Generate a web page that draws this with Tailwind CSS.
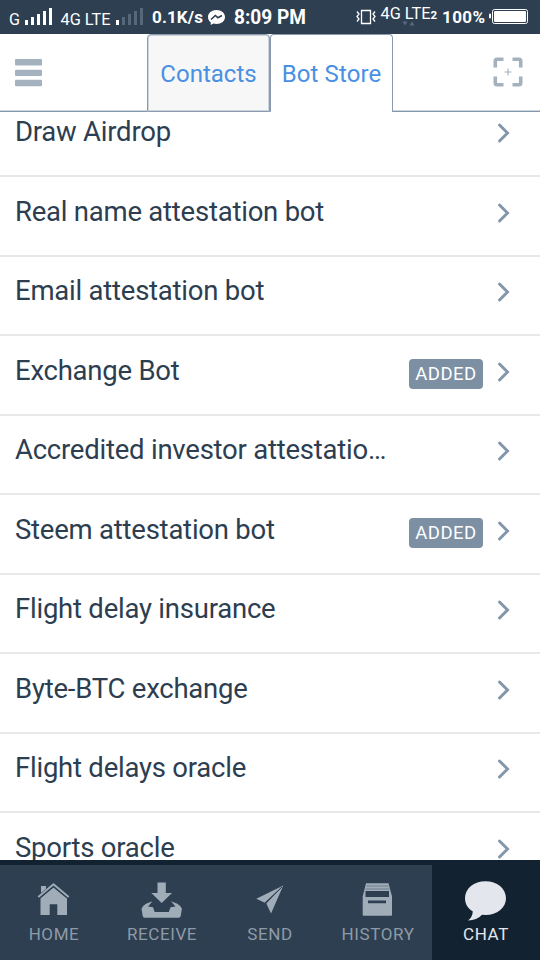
<!DOCTYPE html>
<html lang="en">
<head>
<meta charset="utf-8">
<title>Bot Store</title>
<script src="https://cdn.jsdelivr.net/npm/@tailwindcss/browser@4"></script>
</head>
<body class="bg-white">
<div class="w-[540px] h-[960px] overflow-hidden flex flex-col bg-white font-['Roboto',sans-serif] text-[#2c3e50]">

  <!-- Status bar -->
  <header class="h-[34px] shrink-0 bg-[#2e3f52] text-white relative">
    <svg class="block" width="540" height="34" viewBox="0 0 540 34" fill="#fff" font-family="Roboto, sans-serif">
      <text x="9" y="25" font-size="16.500" textLength="11" lengthAdjust="spacingAndGlyphs">G</text>
      <path d="M25 20h3v5h-3zM31 17h3v8h-3zM37 14h3v11h-3zM43 11h3v14h-3zM49 8h3v17h-3z"/>
      <text x="60.500" y="25" font-size="17" textLength="50" lengthAdjust="spacingAndGlyphs">4G LTE</text>
      <path d="M116 20h3v5h-3z"/>
      <path fill="#56677a" d="M122 17h3v8h-3zM128 14h3v11h-3zM134 11h3v14h-3zM140 8h3v17h-3z"/>
      <text x="152" y="23" font-size="17" font-weight="700" textLength="51">0.1K/s</text>
      <path d="M216.500 10c-4.900 0-8.500 3.100-8.500 7 0 2.200 1 4 2.700 5.300V25l2.700-1.400c1 .3 2 .4 3.100.4 4.900 0 8.500-3.100 8.500-7s-3.600-7-8.500-7z"/>
      <path d="M211 19.500l4.300-4 2.600 2.200 4.100-2.200" fill="none" stroke="#2e3f52" stroke-width="1.600"/>
      <text x="234" y="24" font-size="19.500" font-weight="700" textLength="72" lengthAdjust="spacingAndGlyphs">8:09 PM</text>
      <path d="M361.500 10.500h9v13h-9zM357 11.500l2 2.500-2 2.500 2 2.500-2 2.500M375 11.500l-2 2.500 2 2.500-2 2.500 2 2.500" fill="none" stroke="#fff" stroke-width="1.300"/>
      <text x="380.500" y="19" font-size="17" textLength="50" lengthAdjust="spacingAndGlyphs">4G LTE</text>
      <text x="430.500" y="19" font-size="11.500" font-weight="700">2</text>
      <path fill="#5a6a7b" d="M402.500 21.500h5l-2.500 4zM409.500 25.500h5l-2.500-4z"/>
      <text x="442" y="23" font-size="17" font-weight="700" textLength="43">100%</text>
      <rect x="492.500" y="9.500" width="35" height="14" rx="2" fill="none" stroke="#fff"/>
      <rect x="494" y="11" width="32" height="11" rx="1"/>
      <rect x="489" y="13.500" width="2" height="5" rx="1"/>
    </svg>
  </header>

  <!-- Tabs -->
  <nav class="h-[78px] shrink-0 flex items-stretch bg-white text-[24px]">
    <div class="w-[147px] border-b border-[#8497ac] pl-[15px] pt-[25px] shadow-[inset_0_-1px_0_#ccd4dd]">
      <svg width="27" height="28" viewBox="0 0 27 28" fill="#a4b1bf"><rect width="27" height="6.400" rx="1"/><rect y="10.700" width="27" height="6.400" rx="1"/><rect y="20.800" width="27" height="6.400" rx="1"/></svg>
    </div>
    <div class="w-[123px] bg-[#f7f7f7] border border-[#8a9bb0] rounded-t-[4px] shadow-[inset_0_0_0_1px_#ccd4dd] flex justify-center text-[#4a90e2] pt-[20px] leading-[38px]">Contacts</div>
    <div class="w-[123px] bg-white border border-b-0 border-[#8a9bb0] rounded-t-[4px] flex justify-center text-[#4a90e2] pt-[20px] leading-[38px] tracking-[0.1px]">Bot Store</div>
    <div class="flex-1 border-b border-[#8497ac] flex justify-end pr-[17.500px] pt-[23px] shadow-[inset_0_-1px_0_#ccd4dd]">
      <svg width="30" height="30" viewBox="0 0 30 30" fill="none" stroke="#a4b1bf" stroke-width="3.600"><path d="M2.300 10.500V4q0-1.700 1.700-1.700h6.500M19.500 2.300H26q1.700 0 1.700 1.700v6.500M27.700 19.500V26q0 1.700-1.700 1.700h-6.500M10.500 27.700H4q-1.700 0-1.700-1.700v-6.500"/><path stroke-width="1.100" d="M11.500 15h7M15 11.500v7"/></svg>
    </div>
  </nav>

  <!-- Bots -->
  <main id="list" class="h-[748px] shrink-0 overflow-hidden"></main>

  <!-- Bottom navigation -->
  <footer class="h-[100px] shrink-0 bg-[#2e3f52] border-t-[5px] border-[#132231] flex text-[17px] leading-[18px] tracking-[0.6px] text-[#8e9ba7]">
    <div class="w-[108px] flex flex-col items-center pt-[16px]">
      <svg width="44" height="44" viewBox="0 0 44 44" fill="#a0acb7"><path d="M9 5h5v4.200l-5 4.300z"/><path d="M21.500 6.200L35 17.200V34h-9.700V23.300h-7.600V34H8.500V17.200z"/><path d="M6.300 16.500L21.500 4 36.700 16.500" fill="none" stroke="#2e3f52" stroke-width="3.600"/><path d="M6.300 16L21.500 3.300 36.700 16" fill="none" stroke="#a0acb7" stroke-width="1.900"/></svg>
      <span>HOME</span>
    </div>
    <div class="w-[108px] flex flex-col items-center pt-[16px]">
      <svg width="44" height="44" viewBox="0 0 44 44" fill="#a0acb7"><path d="M17.500 1.500h8.300V12H32L21.700 22 11.300 12h6.200z"/><path d="M12.500 20.300L6 22.700q-4 2.500-4.500 5L2.700 35q.2 1.700 2 1.700h34q1.800 0 2-1.700l1.200-7.300q-.5-2.500-4.500-5l-6.500-2.400 4.600 5.200-5 .7-1.700 4.800H14.700L13 26.200l-5-.7z"/></svg>
      <span>RECEIVE</span>
    </div>
    <div class="w-[108px] flex flex-col items-center pt-[16px]">
      <svg width="44" height="44" viewBox="0 0 44 44" fill="#a0acb7"><path d="M35.300 4.500L8.300 17.800l8.400 4zM35.300 4.500L18.300 22.600l4.700 9.900z"/><path d="M34 6L17 22.300" stroke="#2e3f52" stroke-width="1"/></svg>
      <span>SEND</span>
    </div>
    <div class="w-[108px] flex flex-col items-center pt-[16px]">
      <svg width="44" height="44" viewBox="0 0 44 44" fill="#a0acb7"><path d="M10 2.300h22.500l3.500 13V34q0 .8-.8.800H7.500q-.8 0-.8-.8V15.500z"/><path fill="#2e3f52" d="M9.500 10H33v6H9.500zM12 19.500h18v2.700H12z"/><path stroke="#6f7f8e" stroke-width="1" d="M10.500 5h22M9.500 8h24"/></svg>
      <span>HISTORY</span>
    </div>
    <div class="w-[108px] flex flex-col items-center pt-[16px] bg-[#132231] text-[#e3e7eb]">
      <svg width="44" height="44" viewBox="0 0 44 44" fill="#e3e6ec"><path d="M21.500 .2C33 .2 42 7.500 42 17.200S33 34 21.500 34l-3.500-.2Q13 39.500 4 39.500q4.500-3.500 4.800-9C4 27.500 1 23 1 17.200 1 7.500 10 .2 21.500 .2z"/></svg>
      <span>CHAT</span>
    </div>
  </footer>
</div>
<script>
const bots = [["Draw Airdrop"],["Real name attestation bot"],["Email attestation bot"],["Exchange Bot",1],["Accredited investor attestatio…"],["Steem attestation bot",1],["Flight delay insurance"],["Byte-BTC exchange"],["Flight delays oracle"],["Sports oracle"]];
document.getElementById("list").innerHTML = bots.map(([name, added], i) => `
<div class="h-[79.500px] flex items-start pl-[15px] pr-[30px] border-b-2 border-[#e8e8e8] ${i === 0 ? "-mt-[14.500px]" : ""}">
  <div class="w-[376px] whitespace-nowrap text-[27.500px] leading-[36px] pt-[16.500px] tracking-[-0.230px]">${name}</div>
  <div class="flex-1 flex justify-end pr-[12px] pt-[22.500px]">${added ? '<span class="w-[74px] h-[30px] shrink-0 rounded-[4px] bg-[#7c8fa3] text-white text-[18.500px] leading-[30px] text-center tracking-[0.5px]">ADDED</span>' : ""}</div>
  <svg class="mt-[24.500px] shrink-0" width="15" height="22" viewBox="0 0 15 22" fill="none" stroke="#8497a9" stroke-width="3" stroke-linecap="round"><path d="M4.500 3l8 8-8 8"/></svg>
</div>`).join("");
</script>
</body>
</html>
